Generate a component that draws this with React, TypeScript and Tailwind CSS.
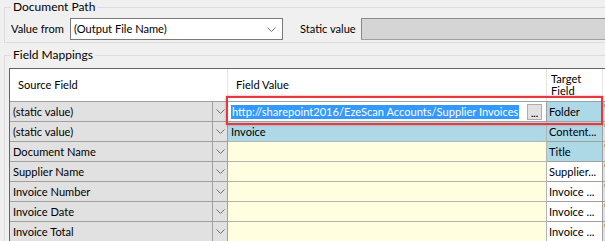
import * as React from "react";

// one mapping row of the grid
type Row = {
  src: string;
  value?: string;
  target: string;
  valueBg: string;
  targetBg: string;
  editing?: boolean;
};

const rows: Row[] = [
  { src: "(static value)", target: "Folder", valueBg: "bg-white", targetBg: "bg-[#add8e6]", editing: true },
  { src: "(static value)", value: "Invoice", target: "Content...", valueBg: "bg-[#add8e6]", targetBg: "bg-[#add8e6]" },
  { src: "Document Name", target: "Title", valueBg: "bg-[#ffffe0]", targetBg: "bg-[#add8e6]" },
  { src: "Supplier Name", target: "Supplier...", valueBg: "bg-[#ffffe0]", targetBg: "bg-white" },
  { src: "Invoice Number", target: "Invoice ...", valueBg: "bg-[#ffffe0]", targetBg: "bg-white" },
  { src: "Invoice Date", target: "Invoice ...", valueBg: "bg-[#ffffe0]", targetBg: "bg-white" },
  { src: "Invoice Total", target: "Invoice ...", valueBg: "bg-[#ffffe0]", targetBg: "bg-white" },
];

function Chevron() {
  return (
    <svg width="9" height="5" viewBox="0 0 9 5" className="shrink-0">
      <polyline points="0.5,0.5 4.5,4.5 8.5,0.5" fill="none" stroke="#707070" strokeWidth="1" />
    </svg>
  );
}

export default function App() {
  return (
    <div className="relative h-[241px] w-[605px] overflow-hidden whitespace-nowrap bg-[#f0f0f0] font-['Lato',sans-serif] text-[11.1px] text-black">
      {/* Document Path */}
      <fieldset className="ml-[4px] w-[640px] border border-[#dcdcdc]">
        <legend className="ml-[6px] px-[2px] text-[12px] leading-[14px]">Document Path</legend>
        <div className="flex items-center px-[6px] pb-[2px] pt-[4px]">
          <span className="w-[59px] shrink-0 leading-[14px]">Value from</span>
          <div className="flex h-[22px] w-[213px] shrink-0 items-center justify-between border border-[#7a7a7a] bg-white pl-[3px] pr-[6px]">
            <span className="leading-[14px]">(Output File Name)</span>
            <Chevron />
          </div>
          <span className="ml-[17px] w-[61px] shrink-0 leading-[14px]">Static value</span>
          <div className="h-[22px] flex-1 border border-[#a0a0a0] border-l-[#8a8a8a] border-t-[#8a8a8a] bg-[#d5d5d5]" />
        </div>
      </fieldset>

      {/* Field Mappings */}
      <fieldset className="ml-[4px] mt-[5px] w-[640px] border border-[#dcdcdc]">
        <legend className="ml-[6px] px-[2px] text-[12px] leading-[14px]">Field Mappings</legend>
        <div className="pl-[4px] pt-[6px]">
          <div className="border border-[#646464] bg-[#f0f0f0]">
            {/* header */}
            <div className="flex h-[33px] border-b border-[#a0a0a0] bg-white">
              <div className="flex w-[218px] items-center border-r border-[#e5e5e5] pl-[8px] pt-[1px]">Source Field</div>
              <div className="flex w-[319px] items-center border-r border-[#e5e5e5] pl-[8px] pt-[1px]">Field Value</div>
              <div className="flex w-[56px] flex-col justify-center border-r border-[#e5e5e5] pl-[4px] leading-[12px]">
                <span>Target</span>
                <span>Field</span>
              </div>
              <div className="w-[40px]" />
            </div>

            {rows.map((r, i) => (
              <div key={i} className="flex h-[20px] leading-[14px]">
                <div className="flex w-[203px] items-center border-b border-r border-[#a0a0a0] bg-[#e1e1e1] pl-[3px]">
                  {r.src}
                </div>
                <div className="flex w-[15px] items-center justify-center border-b border-r border-[#a0a0a0] bg-[#e1e1e1]">
                  <Chevron />
                </div>
                {r.editing ? (
                  <div className="flex w-[319px] items-center border-b border-r border-[#a0a0a0] bg-white pl-[3px]">
                    <span className="bg-[#3399ff] px-[1px] text-white">
                      http://sharepoint2016/EzeScan Accounts/Supplier Invoices
                    </span>
                    <div className="ml-auto mr-[4px] flex h-[16px] w-[15px] items-end justify-center border border-[#adadad] bg-[#e1e1e1] pb-[3px] text-[10px] font-bold leading-[6px]">
                      ...
                    </div>
                  </div>
                ) : (
                  <div className={`flex w-[319px] items-center border-b border-r border-[#b4b4b4] pl-[3px] ${r.valueBg}`}>
                    {r.value}
                  </div>
                )}
                <div className={`flex w-[56px] items-center overflow-hidden border-b border-r border-[#a0a0a0] pl-[2px] ${r.targetBg}`}>
                  {r.target}
                </div>
                <div className="relative w-[40px] border-b border-[#a0a0a0] bg-[#e1e1e1]">
                  <span className="absolute left-[1px] top-[2px] h-[3px] w-[1px] bg-[#e0a030]" />
                </div>
              </div>
            ))}
          </div>
        </div>
      </fieldset>

      {/* red annotation box */}
      <div className="absolute left-[226px] top-[96px] h-[29px] w-[377px] border-2 border-[#e8383d] shadow-[0_0_2px_rgba(232,56,61,0.6)]" />
    </div>
  );
}
